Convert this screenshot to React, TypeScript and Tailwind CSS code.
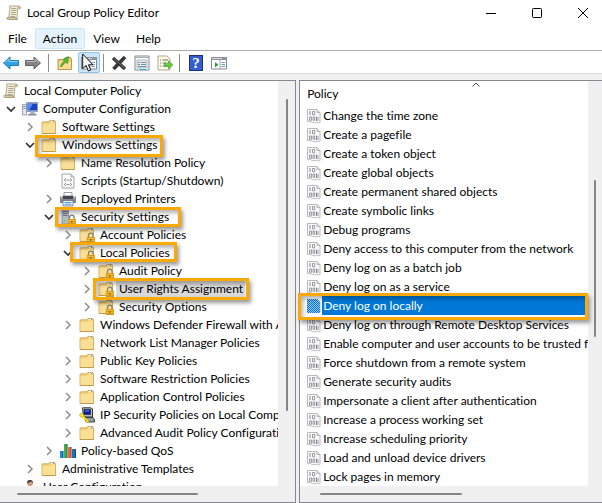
import type { ReactNode } from "react";

type IconName = "scroll" | "computer" | "folder" | "lockFolder" | "script" | "printer" | "server" | "ipsec" | "chart" | "user";

type Node = {
  label: string;
  icon: IconName;
  level: number;
  state?: "open" | "closed";
  selected?: boolean;
  mark?: string;
};

const tree: Node[] = [
  { label: "Local Computer Policy", icon: "scroll", level: 0 },
  { label: "Computer Configuration", icon: "computer", level: 1, state: "open" },
  { label: "Software Settings", icon: "folder", level: 2, state: "closed" },
  { label: "Windows Settings", icon: "folder", level: 2, state: "open", mark: "left-[35px] w-[128px] -top-px h-[22px]" },
  { label: "Name Resolution Policy", icon: "folder", level: 3, state: "closed" },
  { label: "Scripts (Startup/Shutdown)", icon: "script", level: 3 },
  { label: "Deployed Printers", icon: "printer", level: 3, state: "closed" },
  { label: "Security Settings", icon: "server", level: 3, state: "open", mark: "left-[55px] w-[126px] -top-px h-5" },
  { label: "Account Policies", icon: "lockFolder", level: 4, state: "closed" },
  { label: "Local Policies", icon: "lockFolder", level: 4, state: "open", mark: "left-[70px] w-[107px] -top-0.5 h-5" },
  { label: "Audit Policy", icon: "lockFolder", level: 5, state: "closed" },
  { label: "User Rights Assignment", icon: "lockFolder", level: 5, state: "closed", selected: true, mark: "left-[93px] w-[156px] -top-0.5 h-[22px]" },
  { label: "Security Options", icon: "lockFolder", level: 5, state: "closed" },
  { label: "Windows Defender Firewall with Advanced Security", icon: "folder", level: 4, state: "closed" },
  { label: "Network List Manager Policies", icon: "folder", level: 4 },
  { label: "Public Key Policies", icon: "folder", level: 4, state: "closed" },
  { label: "Software Restriction Policies", icon: "folder", level: 4, state: "closed" },
  { label: "Application Control Policies", icon: "folder", level: 4, state: "closed" },
  { label: "IP Security Policies on Local Computer", icon: "ipsec", level: 4, state: "closed" },
  { label: "Advanced Audit Policy Configuration", icon: "folder", level: 4, state: "closed" },
  { label: "Policy-based QoS", icon: "chart", level: 3, state: "closed" },
  { label: "Administrative Templates", icon: "folder", level: 2, state: "closed" },
  { label: "User Configuration", icon: "user", level: 1 },
];

const policies = [
  "Change the time zone",
  "Create a pagefile",
  "Create a token object",
  "Create global objects",
  "Create permanent shared objects",
  "Create symbolic links",
  "Debug programs",
  "Deny access to this computer from the network",
  "Deny log on as a batch job",
  "Deny log on as a service",
  "Deny log on locally",
  "Deny log on through Remote Desktop Services",
  "Enable computer and user accounts to be trusted for delegation",
  "Force shutdown from a remote system",
  "Generate security audits",
  "Impersonate a client after authentication",
  "Increase a process working set",
  "Increase scheduling priority",
  "Load and unload device drivers",
  "Lock pages in memory",
];

const indent = ["pl-0", "pl-0", "pl-[19px]", "pl-[38px]", "pl-[57px]", "pl-[76px]"];

function Svg({ children, className = "" }: { children: ReactNode; className?: string }) {
  return (
    <svg viewBox="0 0 16 16" className={`size-4 shrink-0 ${className}`} aria-hidden="true">
      {children}
    </svg>
  );
}

function Scroll() {
  return (
    <Svg>
      <path d="M3.500 1h9.500c2 0 2.300 2.500.5 2.700h-1.700L11 14H2.500L4 3z" fill="#f4ecd6" stroke="#a3977a" strokeWidth=".8" />
      <path d="M12 1.300c-1 .7-1 2 .2 2.400h2.300V1.800z" fill="#c9b98d" />
      <path d="M1 12.500h9c0 1.500.5 2 1.500 2H2C.8 14.500.6 13.500 1 12.500z" fill="#dccb9e" stroke="#8c8267" strokeWidth=".6" />
      <path d="M5.500 3.500h5M5.500 5.500h5M5.200 7.500h5M4.900 9.500h5M4.600 11.500h4.500" stroke="#a39c88" strokeWidth=".9" />
    </Svg>
  );
}

function FolderShape() {
  return (
    <>
      <path d="M1 3.500 1.500 2.800h6.500l.8-1.300h5l.7.900V14.500H1z" fill="#f3cf7a" stroke="#c9a04c" strokeWidth=".8" />
      <path d="M1.500 5h7l1-1.200h4.500V14H1.500z" fill="#fadf96" />
      <path d="M10 2.500h3.500" stroke="#fff" />
      <path d="M11.800 2.500h1.500" stroke="#4da0d8" />
      <path d="M1 14.500h13.500" stroke="#bd9440" strokeWidth=".8" />
    </>
  );
}

function Padlock() {
  return (
    <>
      <path d="M9.500 10.500V8.500a2.300 2.300 0 0 1 4.600 0v2" fill="none" stroke="#8a8471" strokeWidth="1.300" />
      <path d="M7.800 10h8.200v6H7.800z" fill="#d99a16" />
      <path d="M8.500 11.500h7M8.500 13.500h7" stroke="#f3c752" strokeWidth=".8" />
      <path d="M11.800 12v2" stroke="#80570a" />
    </>
  );
}

function TreeIcon({ name }: { name: IconName }) {
  switch (name) {
    case "scroll":
      return <Scroll />;
    case "folder":
      return <Svg><FolderShape /></Svg>;
    case "lockFolder":
      return <Svg><FolderShape /><Padlock /></Svg>;
    case "computer":
      return (
        <Svg>
          <path d="M.5 3.500h4V14h-4z" fill="#e6e9ef" stroke="#8990a0" strokeWidth=".8" />
          <path d="M1.300 5.500h2.200M1.300 7.500h2.200" stroke="#6f7d99" />
          <path d="M4.500 1.500h11v9h-11z" fill="#d5dbe8" stroke="#7c88a8" strokeWidth=".8" />
          <path d="M5.500 2.500h9.500v7H5.500z" fill="#1743c0" />
          <path d="M5.500 2.500h5.500L7 9.500H5.500z" fill="#5b8cf0" />
          <path d="M9 10.500h3l1.500 2.500h-6z" fill="#aab2c2" />
          <path d="M6 13h8.500v1.500H6z" fill="#868fa3" />
        </Svg>
      );
    case "script":
      return (
        <Svg>
          <path d="M2 1h9l3 3v11H2z" fill="#fbfbfb" stroke="#999" strokeWidth=".9" />
          <path d="M11 1v3h3" fill="#ddd" stroke="#999" strokeWidth=".7" />
          <path d="M6 5.500 4.200 7 6 8.500M10 5.500 11.800 7 10 8.500M6.500 7h3M6 10 4.200 11.500 6 13M10 10l1.800 1.500L10 13M6.500 11.500h3" fill="none" stroke="#7e7e8b" strokeWidth=".9" />
        </Svg>
      );
    case "printer":
      return (
        <Svg>
          <path d="M4 1.500h8V6H4z" fill="#fff" stroke="#7e858c" strokeWidth=".8" />
          <path d="M0 5.500h3v-1h10v1h3V12H0z" fill="#808890" />
          <path d="M3 5h10v3H3z" fill="#40474f" />
          <path d="M1 7h1.500M13.500 7H15" stroke="#e1e5e8" />
          <path d="M3 9.500h10V15H3z" fill="#e9f2fa" stroke="#667" strokeWidth=".7" />
          <path d="M4.500 11.500h7M4.500 13.300h7" stroke="#559ed4" strokeWidth="1.100" />
        </Svg>
      );
    case "server":
      return (
        <Svg>
          <path d="M2 .5h6.500V15H2z" fill="#b6bcc4" stroke="#858d96" strokeWidth=".8" />
          <path d="M3 2.500h4.500M3 4.500h4.500M3 6.500h4.500" stroke="#66717e" strokeWidth=".9" />
          <path d="M4 11.500h1.500" stroke="#55c060" />
          <Padlock />
        </Svg>
      );
    case "ipsec":
      return (
        <Svg>
          <path d="M3.500.8h8l2 1V10h-9z" fill="#b9bcc0" stroke="#222" strokeWidth=".9" />
          <path d="M5 2.500h6.500v5H5z" fill="#101c9c" stroke="#111" strokeWidth=".5" />
          <path d="M6 4h4" stroke="#4ca0f8" />
          <path d="M6 10.500h8l1.500 2.500v2H7z" fill="#9a9da0" stroke="#222" strokeWidth=".8" />
          <circle cx="2.800" cy="8.200" r="2" fill="#ffee38" stroke="#9d8b00" strokeWidth=".6" />
          <path d="m3.500 9.200 6 5.500M6 12l-1 1.200M8 14l-1 1" stroke="#f2da16" strokeWidth="1.800" />
        </Svg>
      );
    case "chart":
      return (
        <Svg>
          <path d="M0 8h3.500v7H0z" fill="#1e8dcc" />
          <path d="M4 1h3.500v14H4z" fill="#41ad4b" />
          <path d="M8 4h3.500v11H8z" fill="#e8674a" />
          <path d="M12 6h4v9h-4z" fill="#176fb5" />
          <path d="M3 8v7M7 1v14M11 4v11M15.500 6v9" stroke="#123" strokeOpacity=".45" />
        </Svg>
      );
    case "user":
      return (
        <Svg>
          <circle cx="8" cy="4" r="3" fill="#c79873" />
          <path d="M5 4c0-4 6-4 6 0L9.500 2.500z" fill="#3d332e" />
          <path d="M2.500 15c0-9 11-9 11 0z" fill="#5d8cc4" />
        </Svg>
      );
  }
}

function PolicyIcon({ selected }: { selected: boolean }) {
  return (
    <Svg>
      <path d="M1.500 1.500h9.500l3 3v10c-1 .8-2-.6-3.500 0s-3 0-4 0-2-1.600-5-1z" fill="#fbfbfc" stroke="#b0b0b6" strokeWidth=".9" />
      <path d="M11 1.500v3h3" fill="#dcdce0" stroke="#a9a9b0" strokeWidth=".8" />
      <path d="M4 3v4M10.500 8.500v4.500" stroke="#85858f" />
      <path d="M6.500 3.500h2.200v3.300H6.500zM3.500 9h2v3.300h-2zM7 9h1.700v3.300H7zM12 9v4" fill="none" stroke="#8c8c96" strokeWidth=".9" />
      {selected && (
        <>
          <pattern id="dither" width="2" height="2" patternUnits="userSpaceOnUse">
            <path d="M0 0h1v1H0zM1 1h1v1H1z" fill="#0078d7" />
          </pattern>
          <path d="M1 1h10l3 3v11H1z" fill="#9cc3e4" />
          <path d="M1 1h10l3 3v11H1z" fill="url(#dither)" />
        </>
      )}
    </Svg>
  );
}

function Chevron({ open }: { open: boolean }) {
  return (
    <svg viewBox="0 0 10 10" className="size-2.5" aria-hidden="true">
      {open ? (
        <path d="m1 3 4 4 4-4" fill="none" stroke="#333" strokeWidth="1.700" />
      ) : (
        <path d="m3 1 4 4-4 4" fill="none" stroke="#8e8e8e" strokeWidth="1.500" />
      )}
    </svg>
  );
}

const markStyle = "pointer-events-none absolute z-10 border-3 border-[#faa907] shadow-[2px_3px_4px_rgba(0,0,0,0.4),inset_2px_3px_4px_rgba(0,0,0,0.3)]";

function TreeRow({ node }: { node: Node }) {
  return (
    <li className={`relative flex h-[18px] items-center ${indent[node.level]}`}>
      {node.level > 0 && (
        <span className="flex w-[19px] shrink-0 justify-center pl-0.5">
          {node.state && (
            <button type="button" aria-label={`Toggle ${node.label}`} className="flex">
              <Chevron open={node.state === "open"} />
            </button>
          )}
        </span>
      )}
      <span className="ml-[3px] flex"><TreeIcon name={node.icon} /></span>
      <span className={`ml-0.5 h-[18px] whitespace-nowrap pl-[3px] leading-[18px] ${node.selected ? "bg-[#d9d9d9] pr-0.5" : ""}`}>{node.label}</span>
      {node.mark && <span className={`${markStyle} ${node.mark}`} />}
    </li>
  );
}

function Divider() {
  return <span className="h-[18px] w-px bg-[#8c8c8c]" />;
}

function Tool({ label, children, className = "" }: { label: string; children: ReactNode; className?: string }) {
  return (
    <button type="button" aria-label={label} className={`flex h-[21px] w-[22px] items-center justify-center ${className}`}>
      {children}
    </button>
  );
}

function Arrow({ back }: { back: boolean }) {
  return (
    <Svg className={back ? "" : "rotate-180"}>
      <path d="M.5 8 7 2v3.500h8.500v5H7V14z" fill={back ? "#30a2e3" : "#858585"} stroke={back ? "#1673af" : "#555"} strokeWidth=".9" />
      <path d={back ? "M2 7.500 6 4v2.500h8.500" : "M2 8.500 6 12V9.500h8.500"} fill="none" stroke={back ? "#8bd2f8" : "#bdbdbd"} />
    </Svg>
  );
}

function PaneIcon() {
  return (
    <Svg>
      <path d="M.5 2.500h15v11.500H.5z" fill="#fff" stroke="#858b93" />
      <path d="M0 2h16v3H0z" fill="#8c939c" />
      <path d="M1 3.500h10" stroke="#e4e8ec" strokeWidth=".8" />
      <path d="M9 5v9" stroke="#858b93" strokeWidth=".8" />
      <path d="m4 7 3.500 2.700L4 12.500z" fill="#2c9c34" />
      <path d="M10.500 7.500h3.500M10.500 9.500h3.500M10.500 11.500h3.500" stroke="#5f8fbf" strokeWidth=".9" />
    </Svg>
  );
}

function Toolbar() {
  return (
    <div className="flex h-[22px] items-center pt-px" role="toolbar" aria-label="Standard">
      <Tool label="Back"><Arrow back /></Tool>
      <Tool label="Forward" className="mr-1"><Arrow back={false} /></Tool>
      <Divider />
      <Tool label="Up one level" className="mr-0.5 ml-[5px]">
        <Svg>
          <path d="M1 4.500h6l1.500-2h5l1 1.500v10.500H1z" fill="#f0cc72" stroke="#a98435" strokeWidth=".8" />
          <path d="M2 7h12v7H2z" fill="#f9dd91" />
          <path d="M3.500 11.500C4 9 5.500 7.500 7.500 6L6 4.500 11.500 1.500 10.500 8.500 9 7.300C7 8.500 5.500 10 5 11.500z" fill="#59b836" stroke="#2f8420" strokeWidth=".6" />
        </Svg>
      </Tool>
      <Tool label="Show or hide console tree" className="relative mr-[3px] rounded-xs border border-[#8fc5ee] bg-[#cce4f7]">
        <PaneIcon />
        <svg viewBox="0 0 12 19" className="absolute top-0 left-[3px] z-20 h-[19px] w-3" aria-hidden="true">
          <path d="M.7 1v14.500l3.400-3 2.300 5.500 2.300-1-2.300-5.200h4.500z" fill="#fff" stroke="#111" />
        </svg>
      </Tool>
      <Divider />
      <Tool label="Delete" className="ml-1">
        <Svg>
          <path d="m2 3 12 11M14 2 2.500 14" fill="none" stroke="#383838" strokeWidth="3.600" />
          <path d="m2.500 3 11 10" stroke="#777" strokeWidth=".8" />
        </Svg>
      </Tool>
      <Tool label="Properties" className="ml-px">
        <Svg>
          <path d="M1 1h14v14H1z" fill="#fff" stroke="#7e8790" />
          <path d="M1 2.500h14" stroke="#a5adb5" />
          <path d="M3 5h10v8H3z" fill="#e7edf3" stroke="#99a4af" strokeWidth=".8" />
          <path d="M4 7.500h2M7 7.500h5M4 9.500h2M7 9.500h5M4 11.500h8" stroke="#5d7488" strokeWidth=".8" />
          <path d="M6 14.500h6" stroke="#24b3dc" />
        </Svg>
      </Tool>
      <Tool label="Export list" className="mr-[3px] ml-px">
        <Svg>
          <path d="M1 1h9l3 3v11H1z" fill="#fffbe6" stroke="#a59f82" strokeWidth=".9" />
          <path d="M3 5h1M5.500 5H11M3 8h1M5.500 8H9M3 11h1M5.500 11H9" stroke="#6c6c69" />
          <path d="M7.500 8.200h4V5.700l4.300 4.300-4.300 4v-2.500h-4z" fill="#67ca3e" stroke="#37932a" strokeWidth=".6" />
        </Svg>
      </Tool>
      <Divider />
      <Tool label="Help" className="ml-[5px]">
        <span className="flex h-4 w-3.5 items-center justify-center border border-[#17337f] bg-[#3560c9] font-['Liberation_Serif',serif] text-[15px] leading-4 font-bold text-white">?</span>
      </Tool>
      <Tool label="Show or hide action pane" className="ml-px"><PaneIcon /></Tool>
    </div>
  );
}

function VScroll({ size }: { size: string }) {
  return (
    <div className={`flex shrink-0 justify-center bg-[#f0f0f0] ${size}`}>
      <span className="h-full w-0.5 rounded-full bg-[#858585]" />
    </div>
  );
}

export default function App() {
  return (
    <div className="flex h-screen flex-col overflow-hidden bg-white font-['Lato','Open_Sans',sans-serif] text-xs text-black [font-variant-ligatures:none]">
      <header className="flex h-[26px] items-center gap-3.5 pr-[3px] pl-1.5">
        <div className="flex flex-1 items-center gap-[5px]">
          <Scroll />
          <h1 className="font-normal">Local Group Policy Editor</h1>
        </div>
        <button type="button" aria-label="Minimize" className="flex w-8 justify-center">
          <svg viewBox="0 0 12 12" className="size-3"><path d="M1 6.500h10" stroke="#000" /></svg>
        </button>
        <button type="button" aria-label="Maximize" className="flex w-8 justify-center">
          <svg viewBox="0 0 12 12" className="size-3"><rect x="1.500" y="1.500" width="9" height="9" rx=".8" fill="none" stroke="#000" /></svg>
        </button>
        <button type="button" aria-label="Close" className="flex w-8 justify-center">
          <svg viewBox="0 0 12 12" className="size-3"><path d="m1 1 10 10M11 1 1 11" stroke="#000" /></svg>
        </button>
      </header>
      <nav className="flex h-[25px] items-start border-b border-[#adadad] pt-0.5">
        {["File", "Action", "View", "Help"].map((item) => (
          <button
            key={item}
            type="button"
            className={`h-[21px] rounded-xs border px-[7px] leading-[19px] ${item === "Action" ? "border-[#cce8ff] bg-[#e5f3ff]" : "border-transparent"}`}
          >
            {item}
          </button>
        ))}
      </nav>
      <Toolbar />
      <main className="flex min-h-0 flex-1 gap-[3px] border-t border-[#dcdcdc] bg-[#f0f0f0] pt-1.5">
        <section aria-label="Console tree" className="flex w-[49.2%] shrink-0 flex-col border-y border-r border-[#828790]">
          <div className="flex min-h-0 flex-1">
            <ul className="min-w-0 flex-1 overflow-hidden rounded-br-xs bg-white pt-px">
              {tree.map((node) => <TreeRow key={node.label} node={node} />)}
            </ul>
            <VScroll size="w-[17px] pt-[18px] pb-[75px]" />
          </div>
          <div className="flex h-4 items-center bg-[#f0f0f0] pr-[97px] pl-[17px]">
            <span className="h-0.5 w-full rounded-full bg-[#858585]" />
          </div>
        </section>
        <section aria-label="Policies" className="flex min-w-0 flex-1 flex-col border-y border-l border-[#828790]">
          <div className="flex min-h-0 flex-1">
            <div className="min-w-0 flex-1 rounded-br-xs bg-white">
              <table className="w-full table-fixed border-collapse">
                <thead>
                  <tr>
                    <th className="relative h-[25px] p-0 pl-[7px] text-left font-normal">
                      Policy
                      <svg viewBox="0 0 8 5" className="absolute top-px left-[172px] h-[5px] w-2" aria-hidden="true">
                        <path d="m.5 4.500 3.500-3.500 3.500 3.500" fill="none" stroke="#555" />
                      </svg>
                    </th>
                  </tr>
                </thead>
                <tbody>
                  {policies.map((name) => {
                    const selected = name === "Deny log on locally";
                    return (
                      <tr key={name}>
                        <td className="relative h-[19px] p-0 pl-1.5">
                          <div className="flex items-center overflow-hidden">
                            <PolicyIcon selected={selected} />
                            <span className={`h-[19px] flex-1 whitespace-nowrap pl-px leading-[19px] ${selected ? "bg-[#0078d7] text-white" : ""}`}>{name}</span>
                          </div>
                          {selected && <span className={`${markStyle} -top-[3px] right-0 -left-0.5 h-[27px]`} />}
                        </td>
                      </tr>
                    );
                  })}
                </tbody>
              </table>
            </div>
            <VScroll size="w-3.5 pt-[99px] pb-[149px]" />
          </div>
          <div className="flex h-4 items-center bg-[#f0f0f0] pr-[140px]">
            <span className="ml-5 h-0.5 w-full rounded-full bg-[#858585]" />
          </div>
        </section>
      </main>
    </div>
  );
}
